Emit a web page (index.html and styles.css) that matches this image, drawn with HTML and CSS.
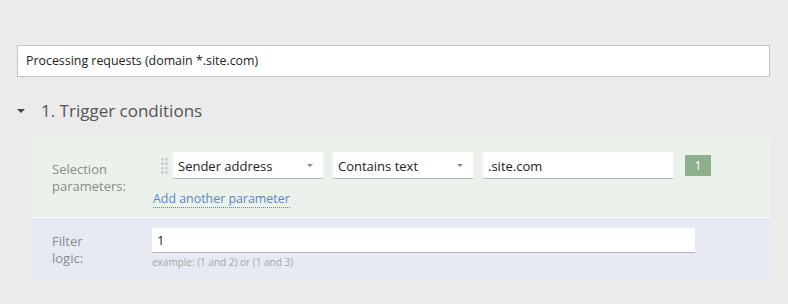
FILE: index.html
```html
<!DOCTYPE html>
<html>
<head>
<meta charset="utf-8">
<link rel="stylesheet" href="styles.css">
</head>
<body>
<div class="page">
  <div class="title-input">Processing requests (domain *.site.com)</div>
  <div class="section-head">
    <span class="caret"></span>
    <span class="section-title">1. Trigger conditions</span>
  </div>
  <div class="panel">
    <div class="row row-green">
      <div class="label">Selection<br>parameters:</div>
      <div class="controls">
        <div class="param-line">
          <span class="handle"><span class="dots"></span></span>
          <div class="select sel-a"><span>Sender address</span><span class="arrow"></span></div>
          <div class="select sel-b"><span>Contains text</span><span class="arrow"></span></div>
          <div class="field">.site.com</div>
          <span class="badge">1</span>
        </div>
        <a class="add-link">Add another parameter</a>
      </div>
    </div>
    <div class="row row-blue">
      <div class="label">Filter<br>logic:</div>
      <div class="controls">
        <div class="logic-input">1</div>
        <div class="hint">example: (1 and 2) or (1 and 3)</div>
      </div>
    </div>
  </div>
</div>
</body>
</html>
```

FILE: styles.css
```css
html, body {
  margin: 0;
  padding: 0;
  background: #ebebeb;
}
body {
  font-family: "Open Sans", "Noto Sans", sans-serif;
  color: #222;
  width: 788px;
  height: 304px;
  overflow: hidden;
}
.page {
  padding: 45px 18px 0 17px;
}
.title-input {
  box-sizing: border-box;
  width: 753px;
  height: 32px;
  background: #fff;
  border: 1px solid #c3c3c3;
  padding: 0 8px;
  font-size: 12.4px;
  line-height: 30px;
  color: #222;
}
.section-head {
  display: flex;
  align-items: center;
  height: 30px;
  margin-top: 18px;
}
.caret {
  width: 0;
  height: 0;
  border-left: 4px solid transparent;
  border-right: 4px solid transparent;
  border-top: 4px solid #444;
  margin-right: 16px;
  margin-top: 2px;
}
.section-title {
  font-size: 17px;
  color: #555;
}
.panel {
  margin-left: 15px;
  margin-top: 12px;
  width: 738px;
}
.row {
  display: grid;
  grid-template-columns: 120px 1fr;
}
.row-green {
  background: #ebf2eb;
  height: 80px;
  border-bottom: 1px solid #fff;
}
.row-blue {
  background: #e7eaf2;
  height: 61px;
}
.label {
  padding-left: 20px;
  font-size: 13px;
  line-height: 17px;
  color: #8a8a8a;
}
.row-green .label { padding-top: 24px; }
.row-blue .label { padding-top: 15px; }
.row-green .controls { padding-top: 15px; }
.row-blue .controls { padding-top: 10px; }
.param-line {
  display: flex;
  align-items: center;
  height: 27px;
}
.handle {
  width: 21px;
  height: 27px;
  display: flex;
  align-items: center;
}
.dots {
  margin-left: 9px;
  width: 7px;
  height: 17px;
  background-image: radial-gradient(circle, #c4c4c4 1.3px, transparent 1.4px);
  background-size: 4px 4.4px;
  background-position: -0.5px 0;
}
.select, .field {
  box-sizing: border-box;
  height: 27px;
  background: #fff;
  border-bottom: 1px solid #b5b5b5;
  font-size: 13px;
  line-height: 26px;
  padding: 0 5px;
  color: #222;
  display: flex;
  justify-content: space-between;
  align-items: center;
}
.select span:first-child, .field { padding-top: 1px; }
.sel-a { width: 150px; }
.sel-b { width: 140px; margin-left: 10px; }
.field { width: 190px; margin-left: 10px; }
.arrow {
  width: 0;
  height: 0;
  border-left: 3.5px solid transparent;
  border-right: 3.5px solid transparent;
  border-top: 3.5px solid #8a8a8a;
  margin-right: 5px;
}
.badge {
  margin-left: 12px;
  width: 26px;
  height: 21px;
  background: #8fb08f;
  color: #fff;
  font-size: 12px;
  line-height: 21px;
  text-align: center;
}
.add-link {
  display: inline-block;
  margin-left: 1px;
  margin-top: 12px;
  font-size: 12.4px;
  line-height: 16px;
  color: #5b86c5;
  border-bottom: 1px dotted #5b86c5;
}
.logic-input {
  box-sizing: border-box;
  width: 543px;
  height: 25px;
  background: #fff;
  border-bottom: 1px solid #b5b5b5;
  font-size: 13px;
  line-height: 25px;
  padding: 0 5px;
}
.hint {
  font-size: 10px;
  color: #a5a5a5;
  margin-top: 3px;
  line-height: 13px;
}
```
